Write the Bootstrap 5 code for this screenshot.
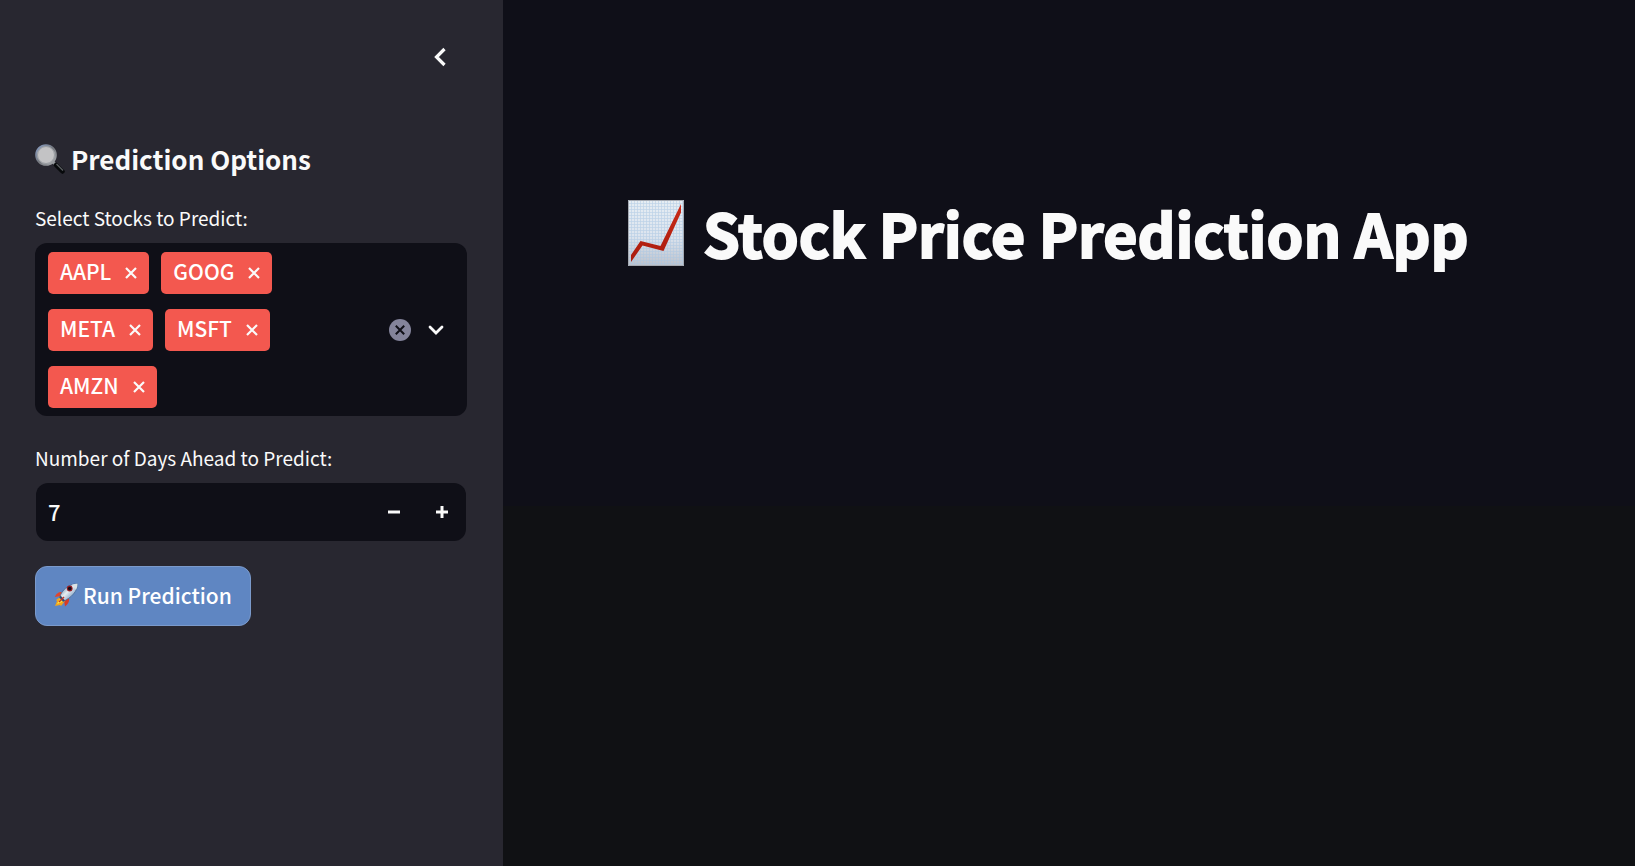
<!DOCTYPE html>
<html lang="en" data-bs-theme="dark">
<head>
<meta charset="utf-8">
<meta name="viewport" content="width=device-width, initial-scale=1">
<title>Stock Price Prediction App</title>
<link href="https://cdn.jsdelivr.net/npm/bootstrap@5.3.0/dist/css/bootstrap.min.css" rel="stylesheet">
<style>
  body { font-family: "Noto Sans CJK SC", "Open Sans", sans-serif; color: #fafafa; background: #101114; }
  svg { display: block; flex: none; }
  .options-panel { flex: 0 0 503px; background: #282730; padding: 32px 36px 32px 35px; }
  .app-main { background: linear-gradient(#0f0f18 506px, #101114 506px); padding: 197px 32px 32px 125px; }
  .app-title { font-size: 59px; line-height: 72px; font-weight: 700; gap: 19px; color: #fafafa; -webkit-text-stroke: 2px #fafafa; }
  .icon-btn { padding: 0; border: 0; background: none; color: #fafafa; display: flex; align-items: center; justify-content: center; }
  .collapse-btn { width: 54px; height: 50px; }
  .panel-title { font-size: 26px; line-height: 36px; font-weight: 700; gap: 6px; margin: 59px 0 27px; color: #fafafa; }
  .field-label { font-size: 19px; line-height: 28px; margin-bottom: 11px; display: block; }
  .field-box { background: #0f0f17; border-radius: 12px; }
  .stock-select { padding: 9px 19px 8px 13px; margin-bottom: 28px; }
  .stock-tags { row-gap: 15px; column-gap: 12px; max-width: 260px; }
  .stock-tag { background: #f3584f; border-radius: 5px; height: 42px; padding: 0 12px; gap: 14px; font-size: 21px; font-weight: 500; line-height: 38px; color: #fff; }
  .arrow-btn { width: 24px; height: 24px; }
  .days-box { height: 58px; margin: 0 1px 25px; }
  .days-input { background: none; border: 0; color: #fafafa; font-size: 22px; font-weight: 500; padding: 0 12px 2px; min-width: 0; outline: 0; }
  .step-btn { width: 48px; height: 58px; }
  .run-btn { height: 60px; border: 1px solid #7b9acb; border-radius: 12px; background: #5f86c2; color: #fff; font-size: 21px; font-weight: 500; line-height: 32px; padding: 0 18px 2px; gap: 5px; }
  .run-btn:hover { background: #7094cc; color: #fff; }
</style>
</head>
<body>
<div class="d-flex min-vh-100">
  <aside class="options-panel">
    <div class="d-flex justify-content-end">
      <button class="icon-btn collapse-btn" type="button" aria-label="Collapse sidebar">
        <svg width="14" height="20" viewBox="0 0 14 20" fill="none" stroke="currentColor" stroke-width="3.200"><path d="M11.500 2 3.500 10l8 8"/></svg>
      </button>
    </div>
    <h2 class="panel-title d-flex align-items-center">
      <svg width="30" height="30" viewBox="0 0 30 30" aria-hidden="true">
        <defs>
          <linearGradient id="rim" x1="0" y1="0" x2="1" y2="1"><stop offset="0" stop-color="#8ba0c6"/><stop offset=".5" stop-color="#74777d"/><stop offset="1" stop-color="#a8abaf"/></linearGradient>
        </defs>
        <path d="m18 18 4 4" stroke="#8e9296" stroke-width="3"/>
        <path d="m21 21 6.500 6.500" stroke="#07090b" stroke-width="4.500" stroke-linecap="round"/>
        <path d="m21.500 20 6.500 6.500" stroke="#5b6063" stroke-width="1.200"/>
        <circle cx="11" cy="11" r="9.800" fill="#c3c3c5" stroke="url(#rim)" stroke-width="2"/>
        <circle cx="11" cy="11" r="8.500" fill="none" stroke="#999da2" stroke-width="1"/>
      </svg>
      <span>Prediction Options</span>
    </h2>
    <label class="field-label" for="stocks">Select Stocks to Predict:</label>
    <div class="field-box stock-select d-flex align-items-center justify-content-between" id="stocks" role="group" aria-label="Stocks">
      <div class="stock-tags d-flex flex-wrap">
        <span class="stock-tag d-flex align-items-start">AAPL<button class="icon-btn align-self-center" type="button" aria-label="Remove AAPL"><svg width="12" height="12" viewBox="0 0 12 12" fill="none" stroke="currentColor" stroke-width="2.200"><path d="m1 1 10 10M11 1 1 11"/></svg></button></span>
        <span class="stock-tag d-flex align-items-start">GOOG<button class="icon-btn align-self-center" type="button" aria-label="Remove GOOG"><svg width="12" height="12" viewBox="0 0 12 12" fill="none" stroke="currentColor" stroke-width="2.200"><path d="m1 1 10 10M11 1 1 11"/></svg></button></span>
        <span class="stock-tag d-flex align-items-start">META<button class="icon-btn align-self-center" type="button" aria-label="Remove META"><svg width="12" height="12" viewBox="0 0 12 12" fill="none" stroke="currentColor" stroke-width="2.200"><path d="m1 1 10 10M11 1 1 11"/></svg></button></span>
        <span class="stock-tag d-flex align-items-start">MSFT<button class="icon-btn align-self-center" type="button" aria-label="Remove MSFT"><svg width="12" height="12" viewBox="0 0 12 12" fill="none" stroke="currentColor" stroke-width="2.200"><path d="m1 1 10 10M11 1 1 11"/></svg></button></span>
        <span class="stock-tag d-flex align-items-start">AMZN<button class="icon-btn align-self-center" type="button" aria-label="Remove AMZN"><svg width="12" height="12" viewBox="0 0 12 12" fill="none" stroke="currentColor" stroke-width="2.200"><path d="m1 1 10 10M11 1 1 11"/></svg></button></span>
      </div>
      <div class="d-flex align-items-center gap-2 flex-shrink-0">
        <button class="icon-btn arrow-btn" type="button" aria-label="Clear all"><svg width="22" height="22" viewBox="0 0 22 22" fill="none"><circle cx="11" cy="11" r="11" fill="#83839a"/><path d="m6.800 6.800 8.400 8.400m0-8.400-8.400 8.400" stroke="#0f0f17" stroke-width="2"/></svg></button>
        <button class="icon-btn arrow-btn ms-1" type="button" aria-label="Show stocks"><svg width="16" height="10" viewBox="0 0 16 10" fill="none" stroke="currentColor" stroke-width="2.800" stroke-linecap="round"><path d="m2 2 6 6 6-6"/></svg></button>
      </div>
    </div>
    <label class="field-label" for="days">Number of Days Ahead to Predict:</label>
    <div class="field-box days-box d-flex align-items-center">
      <input class="days-input flex-grow-1" id="days" type="text" inputmode="numeric" value="7">
      <button class="icon-btn step-btn" type="button" aria-label="Decrease"><svg width="12" height="12" viewBox="0 0 12 12"><path d="M0 4.500h12v3H0z" fill="currentColor"/></svg></button>
      <button class="icon-btn step-btn" type="button" aria-label="Increase"><svg width="12" height="12" viewBox="0 0 12 12"><path d="M4.500 0h3v4.500H12v3H7.500V12h-3V7.500H0v-3h4.500z" fill="currentColor"/></svg></button>
    </div>
    <button class="btn run-btn d-inline-flex align-items-center" type="button">
      <svg width="24" height="24" viewBox="0 0 24 24" aria-hidden="true">
        <defs><linearGradient id="hull" x1="0" y1="0" x2="1" y2="1"><stop offset="0" stop-color="#2f568d"/><stop offset=".45" stop-color="#e7edf0"/><stop offset="1" stop-color="#2f62a5"/></linearGradient></defs>
        <path d="M8 9C4 9 2 11 .8 14l6-1z" fill="#e2442b"/>
        <path d="M15 15c.5 4-1 6-4 8.500L10 17z" fill="#d93b25"/>
        <path d="m6 14-4 3 1 1-2 5 5-1 1 1 4-5z" fill="#f2a51c"/>
        <path d="m6 16-3 5 5-2 1-2z" fill="#ffe844"/>
        <path d="M5.500 14.500C8 7 14 1 23.500.8 24 8 17 15 9 18.500z" fill="url(#hull)" stroke="#40658f" stroke-width=".7"/>
        <path d="M18 1.600c2-.7 4-.8 5.500-.8 0 2-.5 4-1.500 6z" fill="#dbe3e6"/>
        <path d="m5.500 14.500 3.500 4 2-1-4.500-5z" fill="#314c70"/>
        <circle cx="15.700" cy="5.500" r="2.900" fill="#951d25"/><circle cx="15.700" cy="5.500" r="1.800" fill="#150d16"/>
        <path d="m10 14-5 5" stroke="#c83225" stroke-width="1.500"/>
      </svg>
      <span>Run Prediction</span>
    </button>
  </aside>
  <main class="app-main flex-grow-1">
    <h1 class="app-title d-flex align-items-center m-0">
      <svg width="56" height="66" viewBox="0 0 56 66" aria-hidden="true">
        <defs>
          <linearGradient id="paper" x1="0" y1="0" x2="0" y2="1"><stop offset="0" stop-color="#e6edf3"/><stop offset=".55" stop-color="#dce4ee"/><stop offset="1" stop-color="#bcc2cc"/></linearGradient>
          <pattern id="grid" width="3" height="3" patternUnits="userSpaceOnUse"><path d="M0 .5h3M.5 0v3" stroke="#a9c5e2" stroke-width=".7" opacity=".65"/></pattern>
          <linearGradient id="trend" x1="0" y1="0" x2="0" y2="1"><stop offset="0" stop-color="#c92b18"/><stop offset="1" stop-color="#a91b0d"/></linearGradient>
        </defs>
        <path d="M0 0h56v66H0z" fill="url(#paper)"/>
        <path d="M0 0h56v66H0z" fill="url(#grid)"/>
        <path d="M.5.5h55v65H.5z" fill="none" stroke="#a5aab2"/>
        <path d="m3 55 9.500-14 20 5L53 4v8.500L35.500 51 14.500 45.500 3 62z" fill="url(#trend)"/>
      </svg>
      <span>Stock Price Prediction App</span>
    </h1>
  </main>
</div>
<script src="https://cdn.jsdelivr.net/npm/bootstrap@5.3.0/dist/js/bootstrap.bundle.min.js"></script>
</body>
</html>
